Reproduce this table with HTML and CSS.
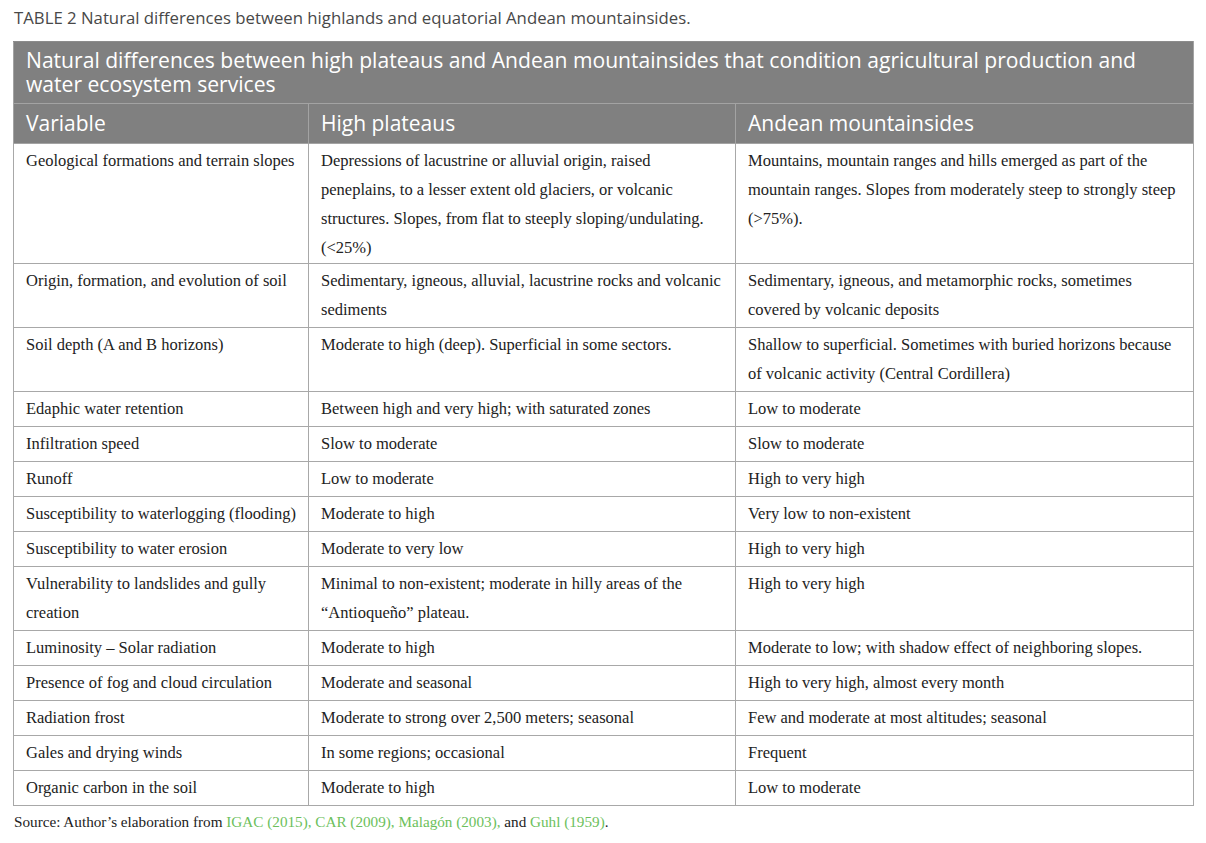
FILE: index.html
```html
<!DOCTYPE html>
<html lang="en">
<head>
<meta charset="utf-8">
<title>Table 2</title>
<link rel="stylesheet" href="styles.css">
</head>
<body>
<div class="page">
  <div class="caption"><span class="label">TABLE 2</span> Natural differences between highlands and equatorial Andean mountainsides.</div>
  <table class="data">
    <colgroup>
      <col class="c1"><col class="c2"><col class="c3">
    </colgroup>
    <thead>
      <tr class="title-row"><th colspan="3">Natural differences between high plateaus and Andean mountainsides that condition agricultural production and water ecosystem services</th></tr>
      <tr class="head-row"><th>Variable</th><th>High plateaus</th><th>Andean mountainsides</th></tr>
    </thead>
    <tbody>
      <tr><td>Geological formations and terrain slopes</td><td>Depressions of lacustrine or alluvial origin, raised peneplains, to a lesser extent old glaciers, or volcanic structures. Slopes, from flat to steeply sloping/undulating. (&lt;25%)</td><td>Mountains, mountain ranges and hills emerged as part of the mountain ranges. Slopes from moderately steep to strongly steep (&gt;75%).</td></tr>
      <tr><td>Origin, formation, and evolution of soil</td><td>Sedimentary, igneous, alluvial, lacustrine rocks and volcanic sediments</td><td>Sedimentary, igneous, and metamorphic rocks, sometimes covered by volcanic deposits</td></tr>
      <tr><td>Soil depth (A and B horizons)</td><td>Moderate to high (deep). Superficial in some sectors.</td><td>Shallow to superficial. Sometimes with buried horizons because of volcanic activity (Central Cordillera)</td></tr>
      <tr><td>Edaphic water retention</td><td>Between high and very high; with saturated zones</td><td>Low to moderate</td></tr>
      <tr><td>Infiltration speed</td><td>Slow to moderate</td><td>Slow to moderate</td></tr>
      <tr><td>Runoff</td><td>Low to moderate</td><td>High to very high</td></tr>
      <tr><td>Susceptibility to waterlogging (flooding)</td><td>Moderate to high</td><td>Very low to non-existent</td></tr>
      <tr><td>Susceptibility to water erosion</td><td>Moderate to very low</td><td>High to very high</td></tr>
      <tr><td>Vulnerability to landslides and gully creation</td><td>Minimal to non-existent; moderate in hilly areas of the “Antioqueño” plateau.</td><td>High to very high</td></tr>
      <tr><td>Luminosity – Solar radiation</td><td>Moderate to high</td><td>Moderate to low; with shadow effect of neighboring slopes.</td></tr>
      <tr><td>Presence of fog and cloud circulation</td><td>Moderate and seasonal</td><td>High to very high, almost every month</td></tr>
      <tr><td>Radiation frost</td><td>Moderate to strong over 2,500 meters; seasonal</td><td>Few and moderate at most altitudes; seasonal</td></tr>
      <tr><td>Gales and drying winds</td><td>In some regions; occasional</td><td>Frequent</td></tr>
      <tr><td>Organic carbon in the soil</td><td>Moderate to high</td><td>Low to moderate</td></tr>
    </tbody>
  </table>
  <p class="source">Source: Author’s elaboration from <a href="#">IGAC (2015),</a> <a href="#">CAR (2009),</a> <a href="#">Malagón (2003),</a> and <a href="#">Guhl (1959)</a>.</p>
</div>
</body>
</html>
```

FILE: styles.css
```css
html, body {
  margin: 0;
  padding: 0;
  background: #ffffff;
}

.page {
  padding: 7px 13px 0 13px;
  width: 1180px;
}

.caption {
  font-family: "Open Sans", Lato, sans-serif;
  font-size: 16.75px;
  line-height: 22px;
  color: #484848;
  padding-left: 1px;
  margin-bottom: 12px;
}

.data {
  border-collapse: collapse;
  width: 1180px;
  table-layout: fixed;
}

.c1 { width: 295px; }
.c2 { width: 427px; }
.c3 { width: 458px; }

.data th {
  background: #808080;
  color: #ffffff;
  font-family: "Open Sans", Lato, sans-serif;
  font-weight: normal;
  text-align: left;
  font-size: 21px;
  line-height: 24px;
  padding: 7px 12px 8px 12px;
  border: 1px solid #a3a3a3;
}

.title-row th {
  font-size: 21.1px;
  line-height: 24px;
  padding: 6px 12px 7px 12px;
  border-top-color: #8c8c8c;
}

.data td {
  font-family: "Liberation Serif", "Times New Roman", serif;
  font-size: 16.5px;
  line-height: 29px;
  color: #222222;
  padding: 2px 12px 3px 12px;
  vertical-align: top;
  border: 1px solid #a8a8a8;
}

.data tbody tr:first-child td {
  padding-bottom: 1px;
}

.source {
  margin: 6px 0 0 1px;
  font-family: "Liberation Serif", "Times New Roman", serif;
  font-size: 15.2px;
  line-height: 20px;
  color: #222222;
}

.source a {
  color: #6cbf5c;
  text-decoration: none;
}
```
